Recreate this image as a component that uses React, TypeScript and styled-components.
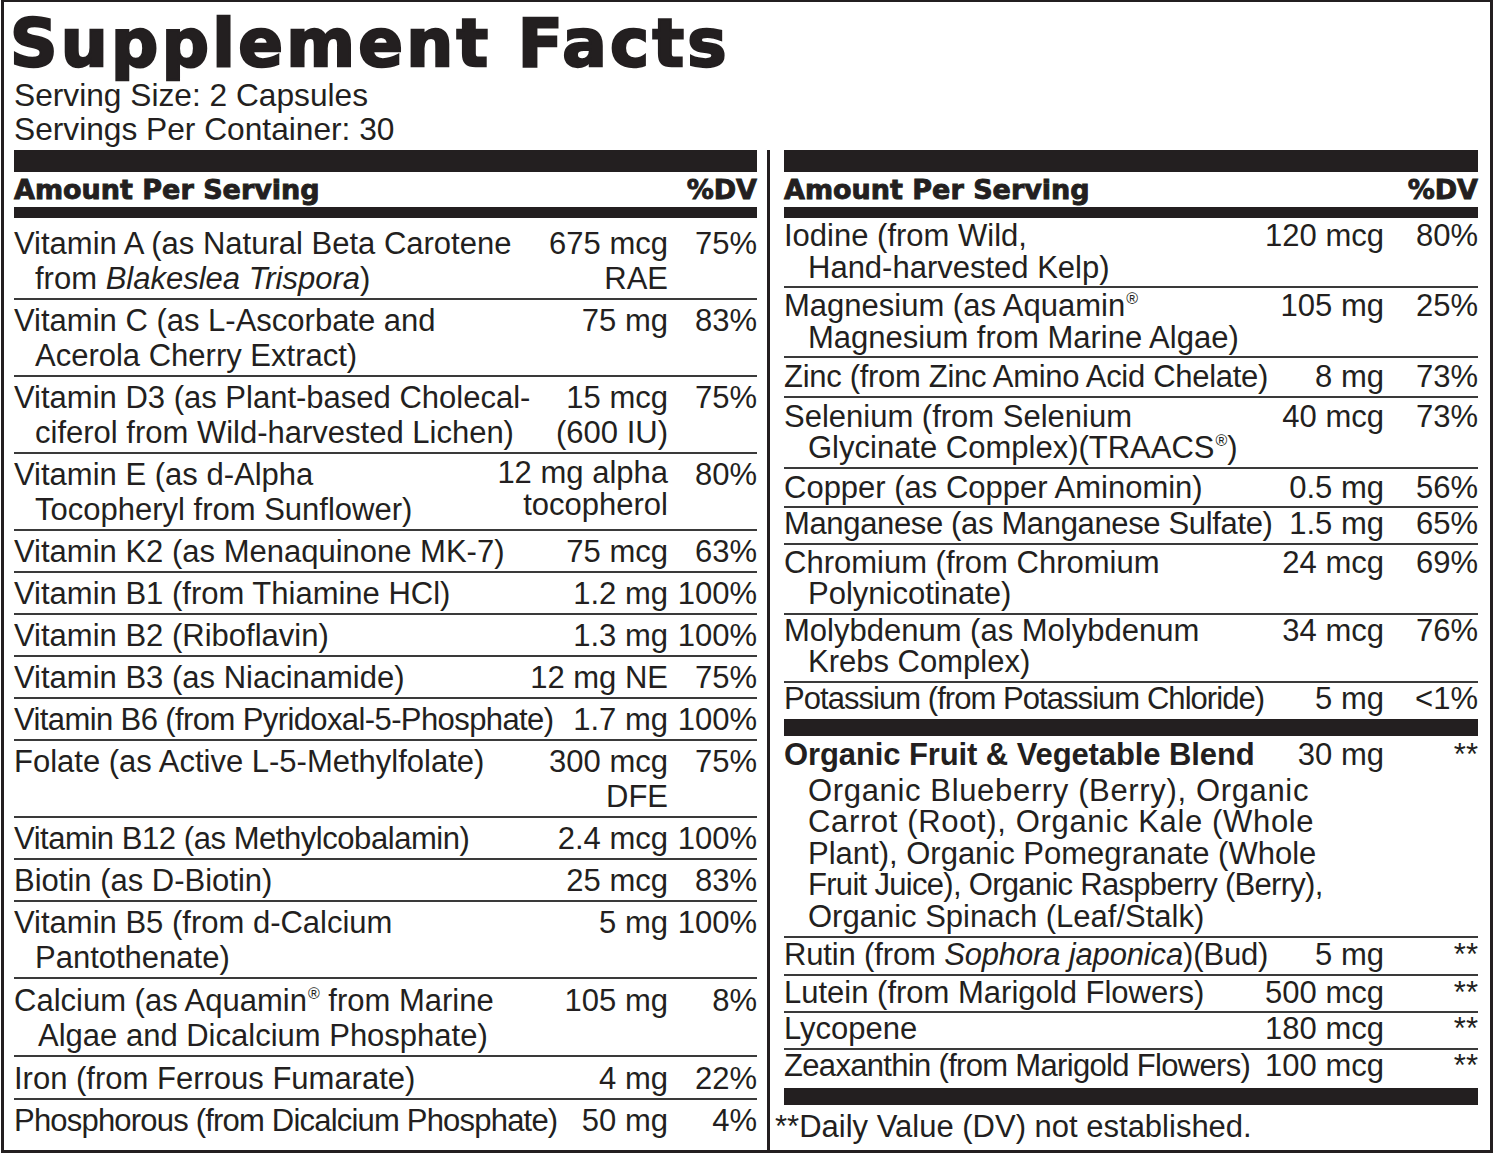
import React from "react";
import styled, { createGlobalStyle } from "styled-components";

const ink = "#231f20";
const rule = "#3a3a3a";

const GlobalStyle = createGlobalStyle`
  html, body {
    margin: 0;
    padding: 0;
    background: #fff;
  }
  body {
    font-family: "Liberation Sans", Arial, sans-serif;
    color: ${ink};
  }
`;

const Label = styled.div`
  box-sizing: border-box;
  width: 1492px;
  height: 1153px;
  margin-left: 1px;
  border: 3px solid ${ink};
  border-top-width: 2px;
  padding: 0 12px 0 10px;
  display: flex;
  flex-direction: column;
`;

const Title = styled.h1`
  margin: 11px 0 0 -4px;
  font-family: "DejaVu Sans", sans-serif;
  font-weight: 700;
  font-size: 66px;
  line-height: 62px;
  letter-spacing: 3.3px;
  -webkit-text-stroke: 2.4px ${ink};
`;

const Serving = styled.div`
  margin-top: 3px;
  font-size: 31.7px;
  line-height: 34px;
`;

const Columns = styled.div`
  flex: 1;
  margin-top: 4px;
  display: grid;
  grid-template-columns: 743px 1fr;
`;

const LeftCol = styled.div`
  display: flex;
  flex-direction: column;
`;

const RightCol = styled.div`
  margin-left: 10px;
  padding-left: 14px;
  border-left: 3px solid ${ink};
  display: flex;
  flex-direction: column;
`;

const Bar = styled.div<{ $h: number; $mt?: number }>`
  height: ${(p) => p.$h}px;
  margin-top: ${(p) => p.$mt ?? 0}px;
  background: ${ink};
  flex-shrink: 0;
`;

const HeadRow = styled.div`
  height: 35px;
  display: flex;
  justify-content: space-between;
  align-items: center;
  font-family: "DejaVu Sans", sans-serif;
  font-weight: 700;
  font-size: 27px;
  -webkit-text-stroke: 0.9px ${ink};
`;

const Row = styled.div<{ $lh: number; $dv: number; $last?: boolean; $top: number; $bottom: number }>`
  display: grid;
  grid-template-columns: minmax(0, 1fr) auto ${(p) => p.$dv}px;
  padding: ${(p) => p.$top}px 0 ${(p) => p.$bottom}px;
  font-size: 31px;
  line-height: ${(p) => p.$lh}px;
  border-bottom: ${(p) => (p.$last ? "none" : `2px solid ${rule}`)};
`;

const Name = styled.div<{ $ls?: number }>`
  white-space: nowrap;
  letter-spacing: ${(p) => p.$ls ?? 0}px;
`;

const Line = styled.span<{ $indent?: number; $ls?: number }>`
  display: block;
  padding-left: ${(p) => p.$indent ?? 0}px;
  letter-spacing: ${(p) => (p.$ls === undefined ? "inherit" : `${p.$ls}px`)};
`;

const Amount = styled.div`
  text-align: right;
  white-space: nowrap;
`;

const AmountLine = styled.span<{ $lh: number }>`
  display: block;
  line-height: ${(p) => p.$lh}px;
`;

const Dv = styled.div`
  text-align: right;
  white-space: nowrap;
`;

const Sup = styled.sup`
  font-size: 16px;
  line-height: 0;
  vertical-align: 12px;
  margin-left: 1px;
`;

const BlendRow = styled.div`
  padding: 3px 0 4px;
  font-size: 31px;
  line-height: 31.5px;
  border-bottom: 2px solid ${rule};
`;

const BlendHead = styled.div`
  display: grid;
  grid-template-columns: minmax(0, 1fr) auto 94px;
  margin-bottom: 4px;
`;

const BlendName = styled.div`
  font-weight: 700;
  letter-spacing: -0.1px;
`;

const BlendList = styled.div`
  padding-left: 24px;
  white-space: nowrap;
`;

const Footnote = styled.div`
  margin: 5px 0 0 -9px;
  font-size: 31px;
  line-height: 34px;
`;

type Item = {
  name: React.ReactNode[];
  amount: string[];
  dv: string;
  ls?: number;
  indent?: number;
  top?: number;
  amountLh?: number;
};

const leftItems: Item[] = [
  {
    name: [
      "Vitamin A (as Natural Beta Carotene",
      <>
        from <i>Blakeslea Trispora</i>)
      </>,
    ],
    amount: ["675 mcg", "RAE"],
    dv: "75%",
    top: 8,
  },
  { name: ["Vitamin C (as L-Ascorbate and", "Acerola Cherry Extract)"], amount: ["75 mg"], dv: "83%" },
  {
    name: ["Vitamin D3 (as Plant-based Cholecal-", "ciferol from Wild-harvested Lichen)"],
    amount: ["15 mcg", "(600 IU)"],
    dv: "75%",
  },
  {
    name: ["Vitamin E (as d-Alpha", "Tocopheryl from Sunflower)"],
    amount: ["12 mg alpha", "tocopherol"],
    dv: "80%",
    amountLh: 32,
  },
  { name: ["Vitamin K2 (as Menaquinone MK-7)"], amount: ["75 mcg"], dv: "63%" },
  { name: ["Vitamin B1 (from Thiamine HCl)"], amount: ["1.2 mg"], dv: "100%" },
  { name: ["Vitamin B2 (Riboflavin)"], amount: ["1.3 mg"], dv: "100%" },
  { name: ["Vitamin B3 (as Niacinamide)"], amount: ["12 mg NE"], dv: "75%" },
  { name: ["Vitamin B6 (from Pyridoxal-5-Phosphate)"], amount: ["1.7 mg"], dv: "100%", ls: -0.6 },
  { name: ["Folate (as Active L-5-Methylfolate)"], amount: ["300 mcg", "DFE"], dv: "75%", top: 3 },
  { name: ["Vitamin B12 (as Methylcobalamin)"], amount: ["2.4 mcg"], dv: "100%", ls: -0.45 },
  { name: ["Biotin (as D-Biotin)"], amount: ["25 mcg"], dv: "83%" },
  { name: ["Vitamin B5 (from d-Calcium", "Pantothenate)"], amount: ["5 mg"], dv: "100%" },
  {
    name: [
      <>
        Calcium (as Aquamin<Sup>®</Sup> from Marine
      </>,
      "Algae and Dicalcium Phosphate)",
    ],
    amount: ["105 mg"],
    dv: "8%",
    indent: 24,
    top: 4,
  },
  { name: ["Iron (from Ferrous Fumarate)"], amount: ["4 mg"], dv: "22%", top: 4 },
  { name: ["Phosphorous (from Dicalcium Phosphate)"], amount: ["50 mg"], dv: "4%", ls: -0.8 },
];

const mineralItems: Item[] = [
  { name: ["Iodine (from Wild,", "Hand-harvested Kelp)"], amount: ["120 mcg"], dv: "80%" },
  {
    name: [
      <>
        Magnesium (as Aquamin<Sup>®</Sup>
      </>,
      "Magnesium from Marine Algae)",
    ],
    amount: ["105 mg"],
    dv: "25%",
  },
  { name: ["Zinc (from Zinc Amino Acid Chelate)"], amount: ["8 mg"], dv: "73%", ls: -0.3, top: 3 },
  {
    name: [
      "Selenium (from Selenium",
      <>
        Glycinate Complex)(TRAACS<Sup>®</Sup>)
      </>,
    ],
    amount: ["40 mcg"],
    dv: "73%",
    top: 3,
  },
  { name: ["Copper (as Copper Aminomin)"], amount: ["0.5 mg"], dv: "56%", top: 3 },
  { name: ["Manganese (as Manganese Sulfate)"], amount: ["1.5 mg"], dv: "65%", ls: -0.35, top: 0 },
  { name: ["Chromium (from Chromium", "Polynicotinate)"], amount: ["24 mcg"], dv: "69%" },
  { name: ["Molybdenum (as Molybdenum", "Krebs Complex)"], amount: ["34 mcg"], dv: "76%", top: 0 },
  { name: ["Potassium (from Potassium Chloride)"], amount: ["5 mg"], dv: "<1%", ls: -0.95, top: 0 },
];

const extraItems: Item[] = [
  {
    name: [
      <>
        Rutin (from <i>Sophora japonica</i>)(Bud)
      </>,
    ],
    amount: ["5 mg"],
    dv: "**",
    ls: -0.15,
  },
  { name: ["Lutein (from Marigold Flowers)"], amount: ["500 mcg"], dv: "**" },
  { name: ["Lycopene"], amount: ["180 mcg"], dv: "**", top: 1 },
  { name: ["Zeaxanthin (from Marigold Flowers)"], amount: ["100 mcg"], dv: "**", ls: -0.68, top: 1 },
];

const blendLines: { text: string; ls: number }[] = [
  { text: "Organic Blueberry (Berry), Organic", ls: 0.65 },
  { text: "Carrot (Root), Organic Kale (Whole", ls: 0.65 },
  { text: "Plant), Organic Pomegranate (Whole", ls: 0 },
  { text: "Fruit Juice), Organic Raspberry (Berry),", ls: -0.7 },
  { text: "Organic Spinach (Leaf/Stalk)", ls: 0 },
];

const FactRows = ({
  items,
  lh,
  dv,
  indent,
  top,
  bottom,
}: {
  items: Item[];
  lh: number;
  dv: number;
  indent: number;
  top: number;
  bottom: number;
}) => (
  <>
    {items.map((item, i) => (
      <Row
        key={i}
        $lh={lh}
        $dv={dv}
        $last={i === items.length - 1}
        $top={item.top ?? top}
        $bottom={bottom}
      >
        <Name $ls={item.ls}>
          {item.name.map((line, j) => (
            <Line key={j} $indent={j > 0 ? item.indent ?? indent : 0}>
              {line}
            </Line>
          ))}
        </Name>
        <Amount>
          {item.amount.map((a, j) => (
            <AmountLine key={j} $lh={item.amountLh ?? lh}>
              {a}
            </AmountLine>
          ))}
        </Amount>
        <Dv>{item.dv}</Dv>
      </Row>
    ))}
  </>
);

const TableHead = () => (
  <>
    <Bar $h={22} />
    <HeadRow>
      <span>Amount Per Serving</span>
      <span>%DV</span>
    </HeadRow>
    <Bar $h={11} />
  </>
);

const App = () => (
  <>
    <GlobalStyle />
    <Label>
      <Title>Supplement Facts</Title>
      <Serving>
        <div>Serving Size: 2 Capsules</div>
        <div>Servings Per Container: 30</div>
      </Serving>
      <Columns>
        <LeftCol>
          <TableHead />
          <FactRows items={leftItems} lh={35} dv={89} indent={21} top={3} bottom={2} />
        </LeftCol>
        <RightCol>
          <TableHead />
          <FactRows items={mineralItems} lh={31.5} dv={94} indent={24} top={2} bottom={3} />
          <Bar $h={17} $mt={2} />
          <BlendRow>
            <BlendHead>
              <BlendName>Organic Fruit &amp; Vegetable Blend</BlendName>
              <Amount>30 mg</Amount>
              <Dv>**</Dv>
            </BlendHead>
            <BlendList>
              {blendLines.map((l) => (
                <Line key={l.text} $ls={l.ls}>
                  {l.text}
                </Line>
              ))}
            </BlendList>
          </BlendRow>
          <FactRows items={extraItems} lh={30.5} dv={94} indent={24} top={2} bottom={3} />
          <Bar $h={17} $mt={4} />
          <Footnote>**Daily Value (DV) not established.</Footnote>
        </RightCol>
      </Columns>
    </Label>
  </>
);

export default App;
